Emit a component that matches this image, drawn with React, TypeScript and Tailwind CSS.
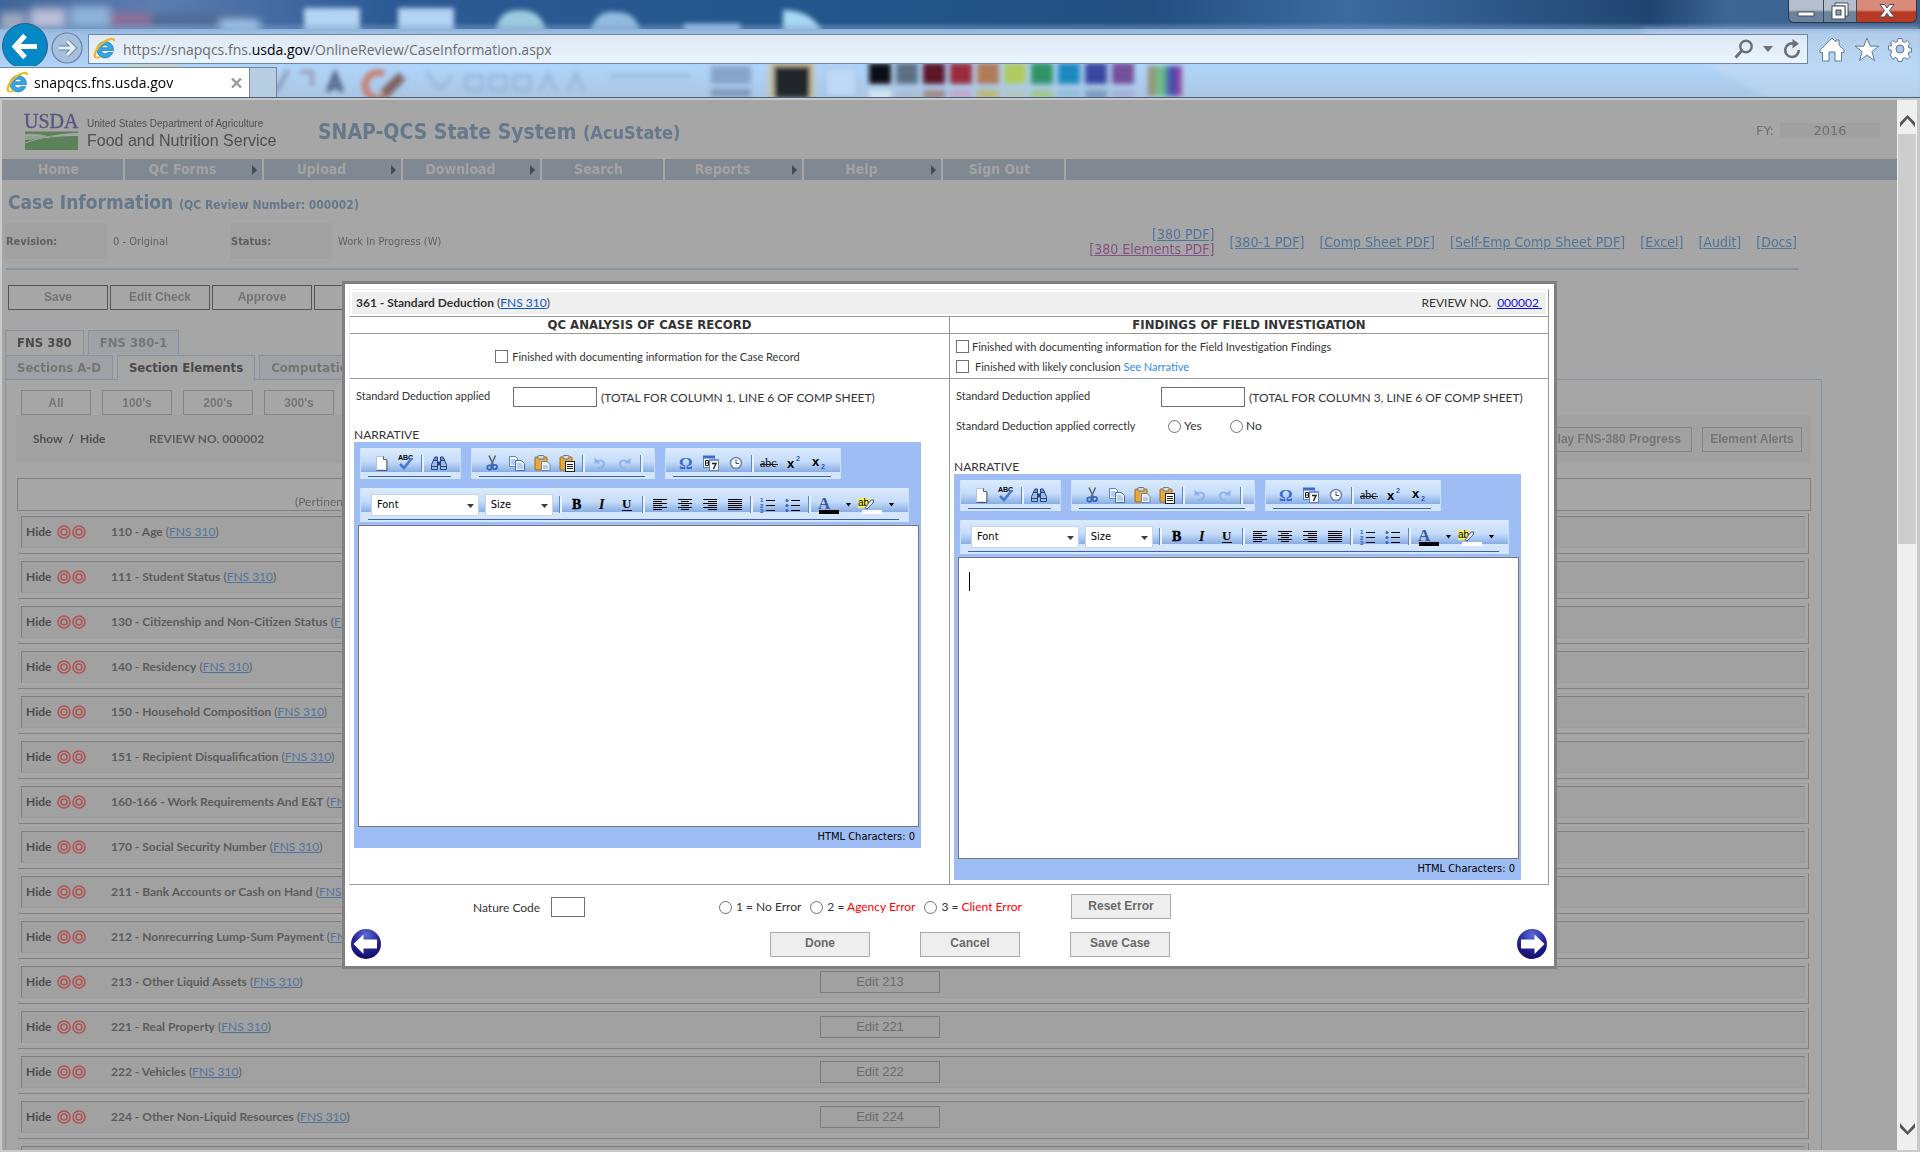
import React from 'react';

// Font stacks shared by the page
const TAHOMA = "font-['DejaVu_Sans_Condensed','Noto_Sans',sans-serif]";
const VERDANA = "font-['DejaVu_Sans',sans-serif]";
const GILL = "font-['Lato',sans-serif]";
const ARIAL = "font-['Liberation_Sans',sans-serif]";
const SEGOE = "font-['Open_Sans',sans-serif]";

const NAV = [
  { label: 'Home', menu: false },
  { label: 'QC Forms', menu: true },
  { label: 'Upload', menu: true },
  { label: 'Download', menu: true },
  { label: 'Search', menu: false },
  { label: 'Reports', menu: true },
  { label: 'Help', menu: true },
  { label: 'Sign Out', menu: false },
];

const ELEMENTS = [
  { code: '110', title: 'Age' },
  { code: '111', title: 'Student Status' },
  { code: '130', title: 'Citizenship and Non-Citizen Status' },
  { code: '140', title: 'Residency' },
  { code: '150', title: 'Household Composition' },
  { code: '151', title: 'Recipient Disqualification' },
  { code: '160-166', title: 'Work Requirements And E&T' },
  { code: '170', title: 'Social Security Number' },
  { code: '211', title: 'Bank Accounts or Cash on Hand' },
  { code: '212', title: 'Nonrecurring Lump-Sum Payment' },
  { code: '213', title: 'Other Liquid Assets' },
  { code: '221', title: 'Real Property' },
  { code: '222', title: 'Vehicles' },
  { code: '224', title: 'Other Non-Liquid Resources' },
  { code: '225', title: 'Combined Resources' },
];

const SWATCHES = ['#0b0f16', '#5b7084', '#5c1228', '#9a2c3c', '#b07a58', '#b0cb62', '#2f9468', '#1f88c0', '#3a479f', '#74509a'];
const SWATCHES_LOW = ['#d5e4f4', '#a9bdd4', '#a08c8c', '#c0a8cc', '#bdb878', '#b6c8c0', '#a0c890', '#93bfdc', '#7f9cc0', '#a4b0d8'];

/* ---------- Browser chrome ---------- */

function GlassBackdrop() {
  return (
    <svg className="absolute inset-0 h-full w-full" aria-hidden="true">
      <defs>
        <linearGradient id="sky" x1="0" x2="1" y1="0" y2="0">
          <stop offset="0" stopColor="#3f6496" />
          <stop offset="0.08" stopColor="#5d7db0" />
          <stop offset="0.2" stopColor="#2d5a94" />
          <stop offset="0.45" stopColor="#22568a" />
          <stop offset="0.6" stopColor="#234e80" />
          <stop offset="0.7" stopColor="#3d6ba0" />
          <stop offset="0.86" stopColor="#1f4470" />
          <stop offset="0.9" stopColor="#3e6794" />
          <stop offset="1" stopColor="#3d5d86" />
        </linearGradient>
        <linearGradient id="glass" x1="0" x2="0" y1="0" y2="1">
          <stop offset="0" stopColor="#9dbde2" />
          <stop offset="0.55" stopColor="#b1d4fa" />
          <stop offset="1" stopColor="#a9c6e2" />
        </linearGradient>
        <linearGradient id="spectrum" x1="0" x2="1" y1="0" y2="0">
          <stop offset="0" stopColor="#a08070" />
          <stop offset="0.4" stopColor="#6cc98a" />
          <stop offset="0.7" stopColor="#4040b0" />
          <stop offset="1" stopColor="#a050a0" />
        </linearGradient>
        <filter id="soft" x="-20%" y="-20%" width="140%" height="140%"><feGaussianBlur stdDeviation="4" /></filter>
        <filter id="faint" x="-20%" y="-20%" width="140%" height="140%"><feGaussianBlur stdDeviation="2.500" /></filter>
      </defs>
      <rect width="100%" height="40" fill="url(#sky)" />
      <g filter="url(#soft)">
        <rect x="0" y="12" width="26" height="30" fill="#9ea9bd" />
        <rect x="30" y="8" width="36" height="22" fill="#b9bdd8" />
        <rect x="70" y="6" width="40" height="22" fill="#8fb2d8" />
        <rect x="110" y="12" width="40" height="16" fill="#8c6f96" />
        <rect x="150" y="14" width="100" height="12" fill="#4f6c94" />
        <rect x="220" y="20" width="40" height="14" fill="#a6c8ee" />
      </g>
      <g filter="url(#faint)">
        <rect x="304" y="8" width="56" height="30" fill="#b3d3f3" />
        <rect x="398" y="8" width="56" height="30" fill="#b3d3f3" />
        <path d="M496 34q0-24 24-24q24 0 26 24z" fill="#9ccbe0" />
        <path d="M590 34q4-24 26-22q22 0 24 22z" fill="#92bbe0" />
        <rect x="684" y="24" width="56" height="12" fill="#9fc4ee" />
        <path d="M783 34V10q30 0 40 24z" fill="#a9d9f5" />
      </g>
      <rect y="29" width="100%" height="70" fill="url(#glass)" />
      <g filter="url(#faint)">
        <path d="M0 28h1920" stroke="#7ea3cc" strokeWidth="3" />
        <path d="M1640 30l130 68h150v-68z" fill="#c5dcf2" opacity="0.5" />
        <rect x="127" y="64" width="52" height="34" fill="#c9d3b8" />
        <path d="M276 92l12-22" stroke="#7c86a0" strokeWidth="3" />
        <path d="M300 72h12v14" stroke="#9a9cb8" strokeWidth="4" fill="none" />
        <path d="M328 92l7-18l7 18M331 87h8" stroke="#4a5c7e" strokeWidth="4" fill="none" />
        <path d="M384 74a13 13 0 1 0 4 20" stroke="#c87862" strokeWidth="6" fill="none" />
        <path d="M384 94l18-18" stroke="#7b6460" strokeWidth="10" />
        <path d="M426 72l14 18l12-14M466 76h16v14h-16zM490 76h16v14h-16zM514 76h16v14h-16zM540 92l8-18l8 18M568 92l8-18l8 18M610 76h80" stroke="#92b2d8" strokeWidth="3" fill="none" />
        <rect x="711" y="66" width="40" height="18" fill="#86a4c8" />
        <rect x="711" y="89" width="40" height="8" fill="#7f98bc" />
        <rect x="769" y="60" width="46" height="38" fill="#c9c5a8" />
        <rect x="774" y="66" width="36" height="32" fill="#24262c" />
        <rect x="826" y="68" width="30" height="28" fill="#bdd9f5" stroke="#93b3d6" />
        {SWATCHES.map((c, i) => (
          <rect key={c} x={869 + i * 27} y="63" width="22" height="21" fill={c} />
        ))}
        {SWATCHES_LOW.map((c, i) => (
          <rect key={c} x={869 + i * 27} y="90" width="22" height="10" fill={c} />
        ))}
        <rect x="1148" y="66" width="34" height="30" fill="url(#spectrum)" />
      </g>
    </svg>
  );
}

function IeLogo() {
  return (
    <svg width="24" height="24" viewBox="0 0 24 24" className="shrink-0" aria-hidden="true">
      <path d="M12 4.500a8.200 8.200 0 1 0 7.800 11h-4.900a3.600 3.600 0 0 1-6.400-2h12A8.300 8.300 0 0 0 12 4.500zM8.600 10.800a3.600 3.600 0 0 1 7 0z" fill="#35a7de" stroke="#1b79bb" strokeWidth="0.700" />
      <path d="M3.300 20.500C-0.500 20 3 10 10.500 5.200C15.500 1.600 21 0.600 21.200 4" fill="none" stroke="#f3b71b" strokeWidth="2.200" />
      <path d="M3.300 20.500c1.400 0.500 3.200-0.300 4.400-1.100" fill="none" stroke="#f3b71b" strokeWidth="1.800" />
    </svg>
  );
}

function WindowButtons() {
  return (
    <div className="absolute top-0 right-[3px] flex h-[23px] overflow-hidden rounded-b-md border border-t-0 border-[#26374d]">
      <button aria-label="Minimize" className="flex w-[35px] items-center justify-center border-r border-[#33475f] bg-linear-to-b from-[#b3bfcd] from-45% to-[#6d829b] to-55%">
        <svg width="18" height="14"><rect x="1" y="8" width="16" height="4" fill="#fff" stroke="#444c5a" /></svg>
      </button>
      <button aria-label="Restore" className="flex w-[33px] items-center justify-center border-r border-[#33475f] bg-linear-to-b from-[#b3bfcd] from-45% to-[#6d829b] to-55%">
        <svg width="20" height="18">
          <path d="M5 1h13v13h-3v-10h-10z" fill="#fff" stroke="#444c5a" />
          <rect x="2" y="4" width="13" height="13" fill="#fff" stroke="#444c5a" />
          <rect x="6" y="8" width="5" height="5" fill="#8b9db3" stroke="#444c5a" />
        </svg>
      </button>
      <button aria-label="Close" className="flex w-[59px] items-center justify-center bg-linear-to-b from-[#d98b7b] from-45% to-[#b93a22] to-55%">
        <svg width="18" height="16">
          <path d="M2 1.500h4.500l2.500 3.500l2.500-3.500h4.500l-4.500 6l4.800 6.500h-4.800l-2.500-3.800l-2.500 3.800h-4.800l4.800-6.500z" fill="#fff" stroke="#444c5a" />
        </svg>
      </button>
    </div>
  );
}

function BrowserChrome() {
  return (
    <header className="relative h-[98px] shrink-0 overflow-hidden border-b border-[#4b6077]">
      <GlassBackdrop />
      <WindowButtons />
      <div className="relative flex h-[66px] items-end">
        <button aria-label="Back" className="ml-[2px] shrink-0">
          <svg width="46" height="43" viewBox="0 0 46 43">
            <circle cx="23" cy="23" r="22.500" fill="#0588c6" stroke="#2f5d86" />
            <path d="M35 23.500H13M23 12.500l-10 11l10 11" fill="none" stroke="#fff" strokeWidth="5" />
          </svg>
        </button>
        <button aria-label="Forward" className="mb-[2px] ml-[3px] shrink-0">
          <svg width="32" height="32" viewBox="0 0 32 32">
            <circle cx="16" cy="16" r="15" fill="#a5bfdd" stroke="#66809f" strokeWidth="1.200" />
            <path d="M8 16h14M16 9l7 7l-7 7" fill="none" stroke="#6a83a3" strokeWidth="5" />
            <path d="M8 16h14M16 9l7 7l-7 7" fill="none" stroke="#e4eefa" strokeWidth="3" />
          </svg>
        </button>
        <div className="mb-[2px] ml-[5px] flex h-[30px] flex-1 items-center border border-[#71879f] bg-linear-to-b from-[#dde8f4] to-[#e9f4ff]">
          <span className="ml-[4px]"><IeLogo /></span>
          <div role="textbox" aria-label="Address" className={`${SEGOE} ml-[6px] flex-1 text-[14px] text-[#6d6d6d]`}>
            https://snapqcs.fns.<span className="text-black">usda.gov</span>/OnlineReview/CaseInformation.aspx
          </div>
          <button aria-label="Search" className="mr-[9px]">
            <svg width="20" height="20" viewBox="0 0 20 20" fill="none" stroke="#6a7079">
              <circle cx="12" cy="7.500" r="5.700" strokeWidth="2.400" />
              <path d="M8 11.500L1.500 18.500" strokeWidth="3" />
            </svg>
          </button>
          <button aria-label="Show address bar suggestions" className="mr-[10px]">
            <svg width="10" height="6"><path d="M0 0h10l-5 6z" fill="#6a7079" /></svg>
          </button>
          <button aria-label="Refresh" className="mr-[6px]">
            <svg width="18" height="20" viewBox="0 0 18 20" fill="none" stroke="#6a7079">
              <path d="M10 4.500A6.800 6.800 0 1 0 15.800 11" strokeWidth="2.600" />
              <path d="M9.500 0v9.500l6.500-4.700z" fill="#6a7079" stroke="none" />
            </svg>
          </button>
        </div>
        <div className="mb-[4px] flex w-[112px] items-center justify-between pr-[8px] pl-[11px]">
          <button aria-label="Home">
            <svg width="26" height="25" viewBox="0 0 26 25"><path d="M13 1L1 13v2.500h2.500V24H10v-9h6v9h6.500v-8.500H25V13l-5-5V3h-3v2z" fill="#fff" stroke="#5e7896" /></svg>
          </button>
          <button aria-label="Favorites">
            <svg width="26" height="25" viewBox="0 0 26 25"><path d="M13 1l3.200 8.200h8.600l-6.900 5.400l2.600 8.900L13 18.300L5.500 23.500l2.600-8.900L1.200 9.200h8.600z" fill="#fff" stroke="#5e7896" /></svg>
          </button>
          <button aria-label="Tools">
            <svg width="24" height="25" viewBox="0 0 24 24" fill="#fff" stroke="#5e7896">
              <path d="M10 1h4l.6 3 2 .9 2.600-1.800 2.700 2.800-1.700 2.600.8 2H23.500v4H21l-.8 2 1.700 2.600-2.700 2.800-2.600-1.800-2 .9-.6 3h-4l-.6-3-2-.9-2.600 1.800L2.100 17l1.700-2.600-.8-2H.5v-4H3l.8-2L2.100 5.900l2.700-2.800 2.600 1.800 2-.9z" />
              <circle cx="12" cy="11.500" r="4" fill="#a9c7e6" />
            </svg>
          </button>
        </div>
      </div>
      <div className="relative flex h-[31px] pt-px">
        <div className="flex w-[250px] items-center border-t border-r border-[#71879f] bg-white">
          <span className="ml-[6px]"><IeLogo /></span>
          <span className={`${SEGOE} ml-[4px] flex-1 text-[14px] text-black`}>snapqcs.fns.usda.gov</span>
          <button aria-label="Close tab" className="mr-[7px]">
            <svg width="11" height="10"><path d="M1 0.500l9 9M10 0.500l-9 9" stroke="#9a9a9a" strokeWidth="2.400" /></svg>
          </button>
        </div>
        <button aria-label="New tab" className="w-[27px] border-t border-r border-[#71879f] bg-[#b7cde2]" />
      </div>
    </header>
  );
}

/* ---------- Page behind the dialog ---------- */

function UsdaLogo() {
  return (
    <svg width="56" height="40" viewBox="0 0 56 40" className="shrink-0" aria-label="USDA">
      <text x="0" y="16" fontSize="20" fill="#5a5682" stroke="#5a5682" strokeWidth="0.400" fontFamily="Liberation Serif">USDA</text>
      <path d="M1 19.500h53v1.500q-14 0-27 4q-13 5-26 7z" fill="#5b8259" />
      <path d="M1 22q13-1 22 1.500q-10 4.500-22 4.500z" fill="#8fa08e" />
      <path d="M1 31q26-8 53-7v14H1z" fill="#5b8259" />
      <path d="M1 23q14 0 24 3M1 31q24-9 53-9" stroke="#a6a6a6" fill="none" />
    </svg>
  );
}

function PageHeader() {
  return (
    <>
      <div className="flex h-[59px] items-start pl-[22px]">
        <div className="mt-[12px]"><UsdaLogo /></div>
        <div className={`${ARIAL} ml-[7px] mt-[17px] w-[231px] text-[#4f4f4f]`}>
          <div className="text-[10px] leading-[14px]">United States Department of Agriculture</div>
          <div className="text-[16px] leading-[20px]">Food and Nutrition Service</div>
        </div>
        <h1 className={`${TAHOMA} mt-[19px] text-[21px] leading-[26px] font-bold text-[#66788c]`}>
          SNAP-QCS State System <span className="text-[18px]">(AcuState)</span>
        </h1>
        <div className={`${VERDANA} mt-[23px] mr-[17px] ml-auto flex items-center text-[13px] leading-[15px] text-[#6f6f6f]`}>
          <span>FY:</span>
          <span className="ml-[6px] w-[100px] bg-[#a0a0a0] text-center">2016</span>
        </div>
      </div>
      <nav className={`${TAHOMA} flex h-[21px] bg-[#808891] text-[14px] font-bold`}>
        {NAV.map((item) => (
          <a key={item.label} href="#" className={`flex items-center border-r-2 border-[#a6a6a6] text-[#a3a3a3] ${item.menu ? 'w-[139px]' : 'w-[123px]'}`}>
            <span className={`flex-1 text-center ${item.menu ? 'pr-[12px]' : 'pr-[8px]'}`}>{item.label}</span>
            {item.menu && <svg width="5" height="10" className="mr-[5px]"><path d="M0 0v10l5-5z" fill="#4a4a4a" /></svg>}
          </a>
        ))}
      </nav>
    </>
  );
}

function CaseSummary() {
  const link = 'text-[#52749c] underline';
  return (
    <>
      <h2 className={`${TAHOMA} flex h-[43px] items-baseline pt-[10px] pl-[6px] text-[19px] leading-[24px] font-bold text-[#66788c]`}>
        Case Information&nbsp;<span className="text-[12px]">(QC Review Number: 000002)</span>
      </h2>
      <div className={`${TAHOMA} flex h-9 items-center pl-[3px] text-[11px] text-[#606060]`}>
        <span className="flex h-full w-[102px] items-center bg-[#a1a1a1] pt-[2px] pl-px font-bold">Revision:</span>
        <span className="w-[123px] pt-[2px] pl-[6px]">0 - Original</span>
        <span className="flex h-full w-[102px] items-center bg-[#a1a1a1] pt-[2px] pl-px font-bold">Status:</span>
        <span className="pt-[2px] pl-[6px]">Work In Progress (W)</span>
        <div className="mr-[100px] ml-auto flex items-center gap-[15px] pt-[2px] text-[14px] leading-[15px]">
          <div className="flex flex-col items-end">
            <a href="#" className={link}>[380 PDF]</a>
            <a href="#" className="text-[#855084] underline">[380 Elements PDF]</a>
          </div>
          <a href="#" className={link}>[380-1 PDF]</a>
          <a href="#" className={link}>[Comp Sheet PDF]</a>
          <a href="#" className={link}>[Self-Emp Comp Sheet PDF]</a>
          <a href="#" className={link}>[Excel]</a>
          <a href="#" className={link}>[Audit]</a>
          <a href="#" className={link}>[Docs]</a>
        </div>
      </div>
      <div className="mt-[9px] mr-[98px] ml-[4px] h-[2px] shrink-0 bg-[#8795a2]" />
      <div className={`${ARIAL} mt-[15px] ml-[6px] flex gap-[2px] text-[12px] font-bold text-[#737373]`}>
        {['Save', 'Edit Check', 'Approve', ''].map((b) => (
          <button key={b} className="h-[25px] w-[100px] border border-[#555] pb-[2px]">{b}</button>
        ))}
      </div>
    </>
  );
}

function Rings() {
  return (
    <svg width="30" height="14" viewBox="0 0 30 14" fill="none" stroke="#b25454" strokeWidth="1.600" aria-hidden="true">
      <circle cx="7" cy="7" r="6" /><circle cx="7" cy="7" r="3" />
      <circle cx="22" cy="7" r="6" /><circle cx="22" cy="7" r="3" />
    </svg>
  );
}

function ElementRow({ code, title }: { code: string; title: string }) {
  return (
    <li className="mr-[12px] ml-[12px] h-[41px] shrink-0 border border-[#9f9f9f] border-r-[#808080] border-b-[#808080] pt-[2px] pr-[3px] pl-[2px]">
      <div className="relative flex h-[32px] items-center border border-[#9c9c9c] border-t-[#7d7d7d] border-l-[#7d7d7d] bg-[#a1a1a1] pl-[4px] text-[12px] text-[#5c5c5c]">
        <button className="w-[31px] text-left font-bold text-[#4c4c4c]">Hide</button>
        <Rings />
        <span className="ml-[24px]">
          <b>{code} - {title}</b> (<a href="#" className="text-[#52749c] underline">FNS 310</a>)
        </span>
        <button className={`${ARIAL} absolute top-[4px] left-[798px] h-[22px] w-[120px] border border-[#7c7c7c] text-[13px] text-[#6c6c6c]`}>
          Edit {code}
        </button>
      </div>
    </li>
  );
}

function ElementsPanel() {
  const tab = 'border border-b-0 border-[#8593a0] px-[11px] flex items-center';
  const pill = 'h-[25px] w-[70px] border border-[#858585]';
  return (
    <div className="mt-[20px] flex min-h-0 flex-1 flex-col pr-[75px] pl-[3px]">
      <div className={`${TAHOMA} flex gap-[4px] text-[13px] font-bold text-[#757575]`}>
        <button className={`${tab} h-[25px] text-[#4a4a4a]`}>FNS 380</button>
        <button className={`${tab} h-[24px] bg-[#9fa1a6]`}>FNS 380-1</button>
      </div>
      <div className={`${TAHOMA} -mb-px flex gap-[4px] border-l border-[#8593a0] text-[13px] font-bold text-[#757575]`}>
        <button className={`${tab} h-[25px] border-b border-l-0 bg-[#9fa1a6]`}>Sections A-D</button>
        <button className={`${tab} relative h-[25px] bg-[#a6a6a6] text-[#4a4a4a]`}>Section Elements</button>
        <button className={`${tab} h-[25px] border-b bg-[#9fa1a6]`}>Computation Sheet</button>
      </div>
      <div className="flex min-h-0 flex-1 flex-col border border-b-0 border-[#8593a0] px-[10px]">
        <div className={`${ARIAL} mt-[10px] ml-[5px] flex gap-[11px] text-[12px] font-bold text-[#757575]`}>
          <button className={pill}>All</button>
          <button className={pill}>100's</button>
          <button className={pill}>200's</button>
          <button className={pill}>300's</button>
        </div>
        <div className="flex h-[48px] shrink-0 items-center bg-[#a1a1a1] pl-[17px] text-[12px] font-bold text-[#4f4f4f]">
          <span className="w-[116px]"><button>Show</button> &nbsp;/&nbsp; <button>Hide</button></span>
          <span className="text-[#5c5c5c]">REVIEW NO. 000002</span>
          <div className={`${ARIAL} mr-[9px] ml-auto flex gap-[10px] text-[#757575]`}>
            <button className="h-[25px] border border-[#858585] px-[10px]">Display FNS-380 Progress</button>
            <button className="h-[25px] w-[100px] border border-[#858585]">Element Alerts</button>
          </div>
        </div>
        <div className="mt-[15px] ml-px h-[33px] shrink-0 border border-[#808080] pt-[15px] pl-[277px] text-[12px] leading-[15px] text-[#666]">
          (Pertinent information for each element)
        </div>
        <ul className="-mx-[10px] mt-[2px] flex min-h-0 flex-col gap-[4px] overflow-hidden">
          {ELEMENTS.map((el) => (
            <ElementRow key={el.code} code={el.code} title={el.title} />
          ))}
        </ul>
      </div>
    </div>
  );
}

/* ---------- Rich text editor ---------- */

function Tool({ label, children }: { label: string; children: React.ReactNode }) {
  return (
    <button aria-label={label} className="flex h-full w-[25px] items-center justify-center">
      <svg width="18" height="18" viewBox="0 0 18 18">{children}</svg>
    </button>
  );
}

function Divider() {
  return (
    <span className="flex w-[8px] justify-center">
      <span className="h-[17px] w-[3px] border-l border-[#5f86c9] bg-[#e8f2ff]" />
    </span>
  );
}

function Lines({ widths, align }: { widths: number[]; align: 'left' | 'center' | 'right' }) {
  return (
    <>
      {widths.map((w, i) => {
        const x = align === 'left' ? 2 : align === 'right' ? 16 - w : 9 - w / 2;
        return <rect key={i} x={x} y={3 + i * 2} width={w} height="1" fill="#000" />;
      })}
    </>
  );
}

function Paste({ lines }: { lines: boolean }) {
  return (
    <>
      <rect x="2" y="3" width="12" height="13" rx="1" fill="#e5a93c" stroke="#9a6a1b" />
      <rect x="5" y="1.500" width="6" height="3.500" rx="1" fill="#d8dbe0" stroke="#70747c" />
      {lines ? (
        <>
          <rect x="7.500" y="7.500" width="9" height="10" fill="#fff" stroke="#222" />
          <path d="M9 10.500h6M9 12.500h6M9 14.500h6" stroke="#222" />
        </>
      ) : (
        <>
          <path d="M8.500 7.500h5.500l3 3v6h-8.500z" fill="#e7f0fd" stroke="#6f86b3" />
          <path d="M10 12h5M10 14h5" stroke="#8ba5d8" />
        </>
      )}
    </>
  );
}

const GROUP = 'border-x border-[#c9dffb] bg-[linear-gradient(#dcebfd_0px,#c4dbf9_14px,#88ade4_24px,#d3e6fd_24px)] pr-[9px] pl-[7px]';

function Caret({ label }: { label: string }) {
  return (
    <button aria-label={label} className="flex w-[16px] justify-center">
      <svg width="5" height="4"><path d="M0 0h5l-2.500 3.500z" fill="#000" /></svg>
    </button>
  );
}

function Picker({ label, size }: { label: string; size: string }) {
  return (
    <span className={`relative h-[22px] ${size}`}>
      <select aria-label={label} className={`${TAHOMA} h-full w-full appearance-none border border-[#c9d4e6] bg-white pt-[2px] pl-[5px] text-[11px] text-black`}>
        <option>{label}</option>
      </select>
      <svg width="7" height="4" className="pointer-events-none absolute top-[10px] right-[5px]"><path d="M0 0h7l-3.500 4z" fill="#3c3c3c" /></svg>
    </span>
  );
}

function Editor({ id, focused }: { id: string; focused?: boolean }) {
  return (
    <div className="flex w-[567px] flex-col bg-[#9fbdf5] pt-[6px] pr-[2px] pl-[4px]">
      <div className="flex gap-[10px] pl-[2px]">
        <div className={GROUP}>
          <div className="flex h-[28px] items-center pt-[2px]">
            <Tool label="New document">
              <path d="M4.500 2.500h7l3 3v10.500h-10z" fill="#fdfdfd" stroke="#b8c2d0" />
              <path d="M4.500 16.500h10.500v-11M11.500 2.500v3h3" stroke="#4b5a6c" fill="none" />
            </Tool>
            <Tool label="Spell check">
              <text x="1" y="6" fontSize="7" fontWeight="bold" fontFamily="Liberation Sans">ABC</text>
              <path d="M3 10l4 4l8-10" stroke="#4a77cf" strokeWidth="2.600" fill="none" />
            </Tool>
            <Divider />
            <Tool label="Find">
              <path d="M3 7l2-4h2.500v4M10.500 7v-4h2.500l2 4" fill="#6f94cf" stroke="#27457c" />
              <path d="M1.500 15.500v-5l2-4h4v9zM10.500 15.500v-9h4l2 4v5z" fill="#9fbce8" stroke="#27457c" />
              <path d="M8 8h2v3h-2zM2 12.500h5M11 12.500h5" fill="#27457c" stroke="#27457c" />
            </Tool>
          </div>
          <div className="h-px bg-[#3b62a8]" />
          <div className="h-[2px]" />
        </div>
        <div className={GROUP}>
          <div className="flex h-[28px] items-center pt-[2px]">
            <Tool label="Cut">
              <path d="M6 1.500l4.500 10M12.500 1.500L8 11.500" stroke="#5b6878" strokeWidth="1.600" />
              <circle cx="6.500" cy="13.500" r="2.200" fill="none" stroke="#3464bd" strokeWidth="1.800" />
              <circle cx="11.800" cy="13" r="2.200" fill="none" stroke="#3464bd" strokeWidth="1.800" />
            </Tool>
            <Tool label="Copy">
              <path d="M1.500 2.500h6l2 2v8h-8z" fill="#f4f9ff" stroke="#5a81c4" />
              <path d="M3 6h4M3 8h4M3 10h4" stroke="#7ea2dd" />
              <path d="M7.500 6.500h6l3 3v7h-9z" fill="#f4f9ff" stroke="#4069b4" />
              <path d="M9 10h5M9 12h6M9 14h6" stroke="#7ea2dd" />
            </Tool>
            <Tool label="Paste"><Paste lines={false} /></Tool>
            <Tool label="Paste as text"><Paste lines /></Tool>
            <Divider />
            <Tool label="Undo">
              <path d="M7 14.500q7-1 6-6q-2-4-8-0.500" stroke="#8fb2ea" strokeWidth="1.800" fill="none" />
              <path d="M3.500 3.500v6h6z" fill="#8fb2ea" />
            </Tool>
            <Tool label="Redo">
              <path d="M9 14.500q-6-1-5-6q2-4 8-0.500" stroke="#8fb2ea" strokeWidth="1.800" fill="none" />
              <path d="M14.500 3.500v6h-6z" fill="#8fb2ea" />
            </Tool>
            <Divider />
          </div>
          <div className="h-px bg-[#3b62a8]" />
          <div className="h-[2px]" />
        </div>
        <div className={GROUP}>
          <div className="flex h-[28px] items-center pt-[2px]">
            <Tool label="Insert symbol">
              <text x="2" y="15" fontSize="17" fontWeight="bold" fill="#3c6cd0" fontFamily="Liberation Serif">Ω</text>
            </Tool>
            <Tool label="Insert date">
              <rect x="1.500" y="2.500" width="11" height="11" fill="#fff" stroke="#5b82cc" />
              <path d="M1 3h12" stroke="#3f6bd0" strokeWidth="3" />
              <path d="M3.500 6.500h3v5h-3zM3.500 9h3" fill="none" stroke="#222" />
              <rect x="7.500" y="5.500" width="9" height="11" fill="#f3f7fe" stroke="#6c7f9f" />
              <path d="M7 6h10" stroke="#6d94e0" strokeWidth="2" />
              <path d="M10 9.500h4l-2.500 5.500" fill="none" stroke="#222" strokeWidth="1.400" />
            </Tool>
            <Tool label="Insert time">
              <circle cx="9" cy="9" r="5.500" fill="#f6f9fe" stroke="#7584a0" strokeWidth="1.500" />
              <path d="M9 5.500v4h3" stroke="#3a4c6c" fill="none" />
            </Tool>
            <Divider />
            <Tool label="Strikethrough">
              <text x="0" y="13" fontSize="12" fontFamily="Liberation Serif">abc</text>
              <path d="M0 10.500h18" stroke="#222" />
            </Tool>
            <Tool label="Superscript">
              <text x="2" y="14" fontSize="13" fontWeight="bold" fontFamily="Liberation Sans">x</text>
              <text x="11" y="7" fontSize="7" fontWeight="bold" fill="#2c57a8" fontFamily="Liberation Sans">2</text>
            </Tool>
            <Tool label="Subscript">
              <text x="2" y="12" fontSize="13" fontWeight="bold" fontFamily="Liberation Sans">x</text>
              <text x="11" y="15" fontSize="7" fontWeight="bold" fill="#2c57a8" fontFamily="Liberation Sans">2</text>
            </Tool>
          </div>
          <div className="h-px bg-[#3b62a8]" />
          <div className="h-[2px]" />
        </div>
      </div>

      <div className={`${GROUP} mt-[9px] mr-[10px] ml-[2px]`}>
        <div className="flex h-[31px] items-center pt-[2px] pl-[3px]">
          <Picker label="Font" size="mr-[6px] w-[108px]" />
          <Picker label="Size" size="mr-[4px] w-[68px]" />
          <Divider />
          <Tool label="Bold"><text x="4" y="13" fontSize="14" fontWeight="bold" stroke="#000" strokeWidth="0.400" fontFamily="Liberation Serif">B</text></Tool>
          <Tool label="Italic"><text x="6" y="13" fontSize="14" fontWeight="bold" fontStyle="italic" fontFamily="Liberation Serif">I</text></Tool>
          <Tool label="Underline">
            <text x="4" y="12" fontSize="13" fontWeight="bold" fontFamily="Liberation Serif">U</text>
            <path d="M4 14.500h10" stroke="#000" />
          </Tool>
          <Divider />
          <Tool label="Align left"><Lines align="left" widths={[14, 9, 14, 9, 14, 9]} /></Tool>
          <Tool label="Align center"><Lines align="center" widths={[14, 8, 14, 8, 14, 8]} /></Tool>
          <Tool label="Align right"><Lines align="right" widths={[14, 9, 14, 9, 14, 9]} /></Tool>
          <Tool label="Justify"><Lines align="left" widths={[14, 14, 14, 14, 14, 14]} /></Tool>
          <Divider />
          <Tool label="Numbered list">
            <path d="M7 4.500h9M7 9.500h9M7 14.500h9" stroke="#000" />
            <text x="1" y="6" fontSize="6" fontWeight="bold" fill="#2f59b0" fontFamily="Liberation Sans">1</text>
            <text x="1" y="12" fontSize="6" fontWeight="bold" fill="#2f59b0" fontFamily="Liberation Sans">2</text>
            <text x="1" y="17" fontSize="6" fontWeight="bold" fill="#2f59b0" fontFamily="Liberation Sans">3</text>
          </Tool>
          <Tool label="Bulleted list">
            <path d="M7 4.500h9M7 9.500h9M7 14.500h9" stroke="#000" />
            <circle cx="3" cy="4.500" r="1.500" fill="#3a66bd" /><circle cx="3" cy="9.500" r="1.500" fill="#3a66bd" /><circle cx="3" cy="14.500" r="1.500" fill="#3a66bd" />
          </Tool>
          <Divider />
          <button aria-label="Font color" className="flex w-[27px] justify-center">
            <svg width="25" height="22" viewBox="0 0 25 22">
              <text x="4" y="15" fontSize="17" fontWeight="bold" fill="#3a5a9a" fontFamily="Liberation Serif">A</text>
              <rect x="5" y="16" width="20" height="4" fill="#000" />
            </svg>
          </button>
          <Caret label="More font colors" />
          <button aria-label="Highlight" className="flex w-[27px] justify-center">
            <svg width="25" height="22" viewBox="0 0 25 22">
              <rect x="1" y="4" width="11" height="10" fill="#f1ee5f" />
              <text x="1" y="12" fontSize="10" fontFamily="Liberation Sans">ab</text>
              <path d="M8 14l6-8h3l-1 3l-6 6z" fill="#e3e8f2" stroke="#566683" />
              <rect x="5" y="16" width="20" height="4" fill="#fff" />
            </svg>
          </button>
          <Caret label="More highlight colors" />
        </div>
        <div className="h-px bg-[#3b62a8]" />
        <div className="h-[2px]" />
      </div>

      <div className="relative mt-[3px] h-[302px]">
        <textarea id={id} className="h-full w-full resize-none border border-[#767676] bg-white p-[10px] outline-none" />
        {focused && <span className="absolute top-[15px] left-[11px] h-[19px] w-px bg-black" />}
      </div>
      <div className={`${TAHOMA} h-[21px] pr-[4px] text-right text-[11px] leading-[20px] text-black`}>HTML Characters: 0</div>
    </div>
  );
}

/* ---------- Dialog ---------- */

const BOX = 'size-[13px] shrink-0 appearance-none border border-[#707070] bg-white';
const RADIO = 'size-[13px] shrink-0 appearance-none rounded-full border border-[#707070] bg-white';
const FIELD = 'h-[20px] border border-[#707070] bg-white';
const ACTION = 'h-[25px] w-[100px] border border-[#a9a9a9] bg-[#eee] pb-[2px] text-[12px] font-bold text-[#6a6a6a]';

function ColumnHead({ children }: { children: React.ReactNode }) {
  return (
    <h3 className={`${TAHOMA} h-[17px] border-b border-[#999] text-center text-[13px] leading-[16px] font-bold`}>{children}</h3>
  );
}

function DeductionDialog() {
  return (
    <div role="dialog" aria-label="361 - Standard Deduction" className={`${GILL} w-[1215px] border-3 border-[#808080] bg-white pt-[5px] pr-[5px] pl-[4px] text-[12px] text-[#333]`}>
      <div className="border border-[#eee] border-r-[#999] border-b-[#999]">
        <div className="m-[2px] flex h-[22px] items-center bg-[#efefef] pr-[4px] pl-[4px]">
          <b>361 - Standard Deduction</b>&nbsp;(<a href="#" className="text-[#0a58ca] underline">FNS 310</a>)
          <span className="ml-auto">REVIEW NO. &nbsp;</span>
          <a href="#" className="text-[#1010e0] underline">000002&nbsp;</a>
        </div>
        <div className="flex border-t border-[#999]">
          <section className="w-[600px] border-r border-[#999]">
            <ColumnHead>QC ANALYSIS OF CASE RECORD</ColumnHead>
            <div className="flex h-[45px] items-center justify-center gap-[4px] border-b border-[#999] pr-[4px] text-[11px]">
              <input id="case-done" type="checkbox" className={BOX} />
              <label htmlFor="case-done" className="pt-[2px]">Finished with documenting information for the Case Record</label>
            </div>
            <div className="flex items-center pt-[7px] pl-[6px]">
              <label htmlFor="ded1" className="w-[157px] text-[11px]">Standard Deduction applied</label>
              <input id="ded1" className={`${FIELD} w-[84px]`} />
              <span className="ml-[4px] pt-[3px]">(TOTAL FOR COLUMN 1, LINE 6 OF COMP SHEET)</span>
            </div>
            <div className="pt-[19px] pl-[4px]">
              <label htmlFor="narr1" className="block h-[16px] leading-[18px]">NARRATIVE</label>
              <Editor id="narr1" />
            </div>
          </section>
          <section className="flex-1">
            <ColumnHead>FINDINGS OF FIELD INVESTIGATION</ColumnHead>
            <div className="flex h-[45px] flex-col justify-center gap-[4px] border-b border-[#999] pt-px pl-[6px] text-[11px]">
              <div className="flex items-center gap-[3px] leading-[16px]">
                <input id="field-done" type="checkbox" className={BOX} />
                <label htmlFor="field-done">Finished with documenting information for the Field Investigation Findings</label>
              </div>
              <div className="flex items-center gap-[6px] leading-[16px]">
                <input id="likely" type="checkbox" className={BOX} />
                <label htmlFor="likely">Finished with likely conclusion <a href="#" className="text-[#2b8cf0]">See Narrative</a></label>
              </div>
            </div>
            <div className="flex items-center pt-[7px] pl-[6px]">
              <label htmlFor="ded3" className="w-[205px] text-[11px]">Standard Deduction applied</label>
              <input id="ded3" className={`${FIELD} w-[84px]`} />
              <span className="ml-[4px] pt-[3px]">(TOTAL FOR COLUMN 3, LINE 6 OF COMP SHEET)</span>
            </div>
            <div className="mt-[10px] flex h-[18px] items-center pl-[6px]">
              <span className="w-[212px] text-[11px]">Standard Deduction applied correctly</span>
              <label className="flex w-[62px] items-center gap-[3px]"><input type="radio" name="correct" className={RADIO} />Yes</label>
              <label className="flex items-center gap-[3px]"><input type="radio" name="correct" className={RADIO} />No</label>
            </div>
            <div className="pt-[23px] pb-[4px] pl-[4px]">
              <label htmlFor="narr2" className="block h-[16px] leading-[18px]">NARRATIVE</label>
              <Editor id="narr2" focused />
            </div>
          </section>
        </div>
      </div>
      <div className="mt-[9px] flex h-[25px] items-center pl-[124px]">
        <label htmlFor="nature" className="w-[78px] pt-[2px]">Nature Code</label>
        <input id="nature" className={`${FIELD} w-[34px]`} />
        <div className="ml-[134px] flex w-[352px] gap-[9px] pt-px">
          <label className="flex items-center gap-[4px]"><input type="radio" name="error" className={RADIO} />1 = No Error</label>
          <label className="flex items-center gap-[4px]"><input type="radio" name="error" className={RADIO} /><span>2 = <span className="text-[#f00]">Agency Error</span></span></label>
          <label className="flex items-center gap-[4px]"><input type="radio" name="error" className={RADIO} /><span>3 = <span className="text-[#f00]">Client Error</span></span></label>
        </div>
        <button className={`${ARIAL} ${ACTION}`}>Reset Error</button>
      </div>
      <div className={`${ARIAL} flex h-[47px] items-center justify-between pt-[3px] pr-[2px] pl-[2px]`}>
        <button aria-label="Previous element">
          <svg width="30" height="30" viewBox="0 0 30 30">
            <defs><radialGradient id="orb" cx="0.5" cy="0.200" r="0.800"><stop offset="0" stopColor="#5a6ed8" /><stop offset="0.500" stopColor="#2a2a9c" /><stop offset="1" stopColor="#120a66" /></radialGradient></defs>
            <circle cx="15" cy="15" r="15" fill="url(#orb)" />
            <path d="M2.500 15L12.500 5.500v5H26v9H12.500v5.500z" fill="#fff" />
          </svg>
        </button>
        <div className="flex gap-[50px] pr-[10px] pl-[52px]">
          <button className={ACTION}>Done</button>
          <button className={ACTION}>Cancel</button>
          <button className={ACTION}>Save Case</button>
        </div>
        <button aria-label="Next element">
          <svg width="30" height="30" viewBox="0 0 30 30">
            <circle cx="15" cy="15" r="15" fill="url(#orb)" />
            <path d="M27.500 15L17.500 5.500v5H4v9h13.500v5.500z" fill="#fff" />
          </svg>
        </button>
      </div>
    </div>
  );
}

function Scrollbar() {
  return (
    <div className="flex w-[20px] shrink-0 flex-col bg-[#efefef]">
      <button aria-label="Scroll up" className="flex h-[34px] items-end justify-center pb-[6px]">
        <svg width="15" height="13"><path d="M0 12l7.500-8.500l7.500 8.500v-4.500L7.500 0L0 7.500z" fill="#555" /></svg>
      </button>
      <div className="h-[39%] border-x border-[#efefef] bg-[#cdcdcd]" />
      <button aria-label="Scroll down" className="mt-auto flex h-[34px] items-start justify-center pt-[6px]">
        <svg width="15" height="13"><path d="M0 1l7.500 8.500L15 1v4.500L7.500 13L0 5.500z" fill="#555" /></svg>
      </button>
    </div>
  );
}

export default function App() {
  return (
    <div className="flex h-screen flex-col overflow-hidden bg-[#c9c9c9]">
      <BrowserChrome />
      <div className="flex min-h-0 flex-1 border-2 border-[#c9c9c9] border-r-3">
        <div className={`${GILL} relative flex min-w-0 flex-1 flex-col overflow-hidden bg-[#a6a6a6]`}>
          <PageHeader />
          <CaseSummary />
          <ElementsPanel />
          <div className="absolute inset-x-0 top-[181px] flex justify-center">
            <DeductionDialog />
          </div>
        </div>
        <Scrollbar />
      </div>
    </div>
  );
}
